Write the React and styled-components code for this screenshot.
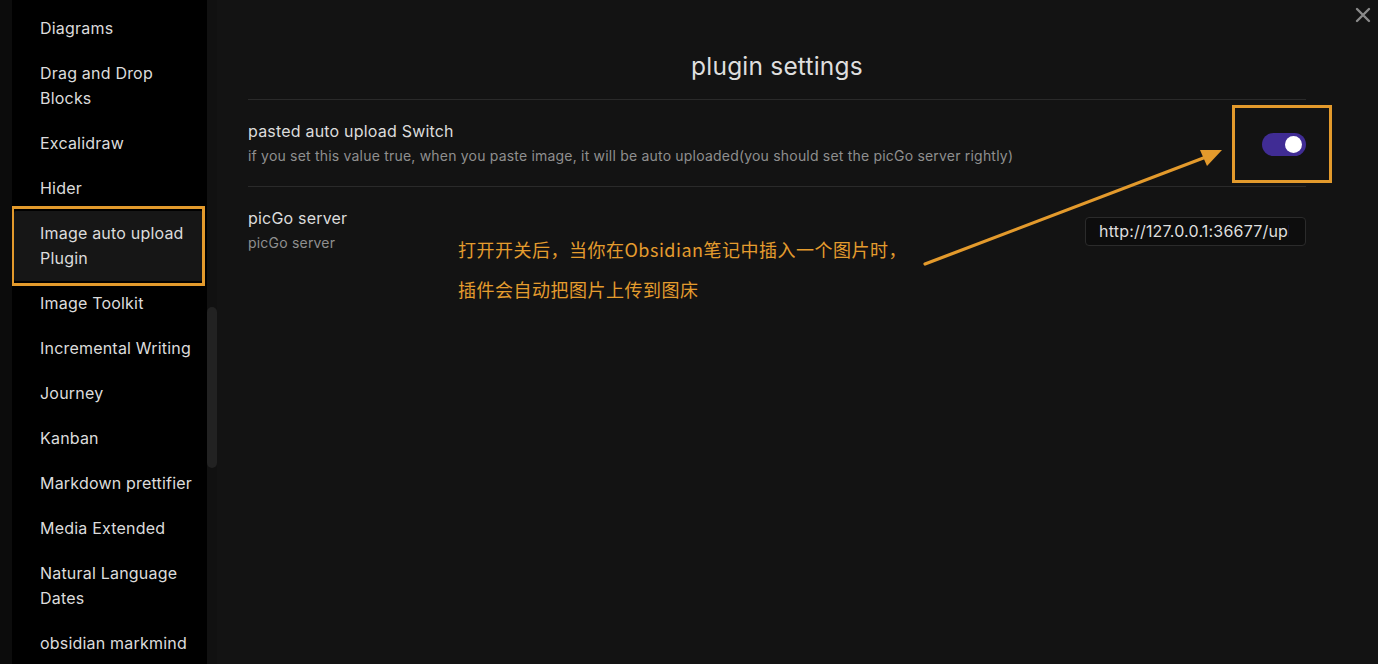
import React from 'react';
import styled, { createGlobalStyle } from 'styled-components';

const GlobalStyle = createGlobalStyle`
  html, body {
    margin: 0;
    padding: 0;
    background: #131313;
  }
  * {
    box-sizing: border-box;
  }
`;

const Page = styled.div`
  position: relative;
  display: flex;
  width: 100%;
  height: 664px;
  overflow: hidden;
  background: #131313;
  font-family: Inter, "Noto Sans", "Noto Sans CJK SC", sans-serif;
  letter-spacing: 0.2px;
`;

const Sidebar = styled.nav`
  flex: 0 0 207px;
  height: 100%;
  overflow: hidden;
  background: #000;
  border-left: 12px solid #0c0c0c;
  padding: 6px 4px 0 2px;
`;

const NavItem = styled.div`
  position: relative;
  padding: 10px 8px 10px 26px;
  font-size: 16px;
  line-height: 25px;
  color: #dcdcdc;
  background: ${({ $active }) => ($active ? '#161616' : 'transparent')};
  border-radius: 2px;

  ${({ $marked }) => $marked && `
    &::after {
      content: '';
      position: absolute;
      top: -5px;
      bottom: -5px;
      left: -3px;
      right: -2px;
      border: 3px solid #e39a2c;
    }
  `}
`;

const ScrollTrack = styled.div`
  flex: 0 0 10px;
  height: 100%;
  padding-top: 307px;
  background: #111;
`;

const ScrollThumb = styled.div`
  width: 10px;
  height: 161px;
  border-radius: 5px;
  background: #222;
`;

const Main = styled.main`
  flex: 1;
  height: 100%;
  padding: 51px 72px 0 31px;
  background: #131313;
`;

const Title = styled.h2`
  margin: 0 0 18px;
  font-size: 24.5px;
  line-height: 30px;
  font-weight: 400;
  color: #dedede;
  text-align: center;
`;

const SettingRow = styled.div`
  display: flex;
  align-items: center;
  gap: 24px;
  padding: 19px 0 17px;
  border-top: 1px solid #2a2a2a;
`;

const SettingInfo = styled.div`
  flex: 1;
`;

const SettingName = styled.div`
  font-size: 16px;
  line-height: 24px;
  color: #dcdcdc;
`;

const SettingDesc = styled.div`
  font-size: 14px;
  line-height: 26px;
  color: #8f8f8f;
`;

const Toggle = styled.div`
  position: relative;
  width: 44px;
  height: 23px;
  border-radius: 12px;
  background: ${({ $on }) => ($on ? '#402c94' : '#444')};

  &::after {
    content: '';
    position: absolute;
    top: 3px;
    right: ${({ $on }) => ($on ? '4px' : '23px')};
    width: 17px;
    height: 17px;
    border-radius: 50%;
    background: #fff;
  }
`;

const TextInput = styled.input`
  width: 221px;
  height: 29px;
  padding: 0 16px 0 13px;
  border: 1px solid #2b2b2b;
  border-radius: 4px;
  background: #0d0d0d;
  color: #dedede;
  font-family: inherit;
  font-size: 16px;
  letter-spacing: 0.2px;
  outline: none;
`;

const CloseButton = styled.button`
  position: absolute;
  top: 6px;
  right: 6px;
  width: 18px;
  height: 18px;
  padding: 0;
  border: none;
  background: transparent;
  cursor: pointer;
`;

const HighlightBox = styled.div`
  position: absolute;
  left: 1232px;
  top: 105px;
  width: 100px;
  height: 78px;
  border: 3px solid #e39a2c;
  pointer-events: none;
`;

const Note = styled.div`
  position: absolute;
  left: 458px;
  top: 229px;
  font-family: "Noto Sans CJK SC", Inter, sans-serif;
  font-size: 18px;
  line-height: 40px;
  letter-spacing: 0.5px;
  color: #e49c2e;
  pointer-events: none;
`;

const ArrowLayer = styled.svg`
  position: absolute;
  left: 0;
  top: 0;
  pointer-events: none;
`;

const plugins = [
  { name: 'Diagrams' },
  { name: 'Drag and Drop Blocks' },
  { name: 'Excalidraw' },
  { name: 'Hider' },
  { name: 'Image auto upload Plugin', active: true },
  { name: 'Image Toolkit' },
  { name: 'Incremental Writing' },
  { name: 'Journey' },
  { name: 'Kanban' },
  { name: 'Markdown prettifier' },
  { name: 'Media Extended' },
  { name: 'Natural Language Dates' },
  { name: 'obsidian markmind' },
];

const App = () => {
  return (
    <>
      <GlobalStyle />
      <Page>
        <Sidebar>
          {plugins.map(p => (
            <NavItem key={p.name} $active={p.active} $marked={p.active}>
              {p.name}
            </NavItem>
          ))}
        </Sidebar>
        <ScrollTrack>
          <ScrollThumb />
        </ScrollTrack>
        <Main>
          <Title>plugin settings</Title>
          <SettingRow>
            <SettingInfo>
              <SettingName>pasted auto upload Switch</SettingName>
              <SettingDesc>
                if you set this value true, when you paste image, it will be auto uploaded(you should set the picGo server rightly)
              </SettingDesc>
            </SettingInfo>
            <Toggle $on />
          </SettingRow>
          <SettingRow>
            <SettingInfo>
              <SettingName>picGo server</SettingName>
              <SettingDesc>picGo server</SettingDesc>
            </SettingInfo>
            <TextInput defaultValue="http://127.0.0.1:36677/upload" />
          </SettingRow>
        </Main>

        <CloseButton aria-label="close">
          <svg width="18" height="18" viewBox="0 0 18 18">
            <path d="M3 3 L15 15 M15 3 L3 15" stroke="#8a8a8a" strokeWidth="2.4" strokeLinecap="round" />
          </svg>
        </CloseButton>

        <HighlightBox />
        <Note>
          <div>打开开关后，当你在Obsidian笔记中插入一个图片时，</div>
          <div>插件会自动把图片上传到图床</div>
        </Note>
        <ArrowLayer width="1378" height="664" viewBox="0 0 1378 664">
          <line x1="925" y1="264" x2="1206" y2="157" stroke="#e39a2c" strokeWidth="3.2" strokeLinecap="round" />
          <polygon points="1222,150 1200,150 1207,166" fill="#e39a2c" />
        </ArrowLayer>
      </Page>
    </>
  );
};

export default App;
